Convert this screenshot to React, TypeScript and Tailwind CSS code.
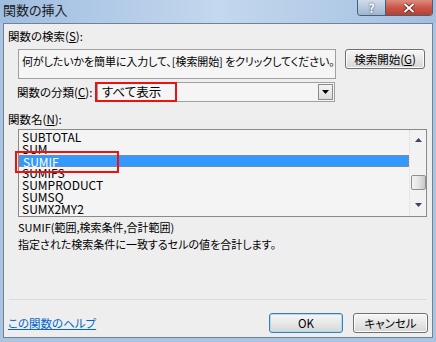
import React from 'react';

const font = "[font-family:'Noto_Sans_CJK_JP',sans-serif] [font-feature-settings:'palt']";

const items = ['SUBTOTAL', 'SUM', 'SUMIF', 'SUMIFS', 'SUMPRODUCT', 'SUMSQ', 'SUMX2MY2'];

const Btn = ({ children, focused }: { children: React.ReactNode; focused?: boolean }) => (
  <div
    className={`flex-1 flex items-center justify-center rounded-[3px] border whitespace-nowrap text-[11.5px] text-black bg-gradient-to-b from-[#f6f6f6] via-[#e8e8e8] to-[#d6d6d6] ${
      focused ? 'border-[#3c7fb1] shadow-[inset_0_0_0_1px_#a8dcf6]' : 'border-[#707070] shadow-[inset_0_0_0_1px_#fcfcfc]'
    }`}
  >
    {children}
  </div>
);

const App = () => {
  return (
    <div className={`w-[436px] h-[342px] flex flex-col bg-[#aac4e2] ${font} text-black`}>
      {/* title bar */}
      <div className="h-[23px] flex items-start bg-gradient-to-r from-[#9fbde0] via-[#c4d8ee] to-[#a2bfe0]">
        <span className="ml-[3px] mt-[3px] text-[13px] leading-[14px] text-[#1a1a1a]">関数の挿入</span>
        <div className="ml-auto mr-[3px] flex h-[16px] rounded-b-[4px] border border-t-0 border-[#4a5e78] overflow-hidden">
          <div className="w-[28px] flex items-center justify-center bg-gradient-to-b from-[#d0dceb] to-[#9db5d2] border-r border-[#4a5e78] text-white font-bold text-[12px] leading-none [text-shadow:0_0_2px_#334]">
            ?
          </div>
          <div className="w-[46px] flex items-center justify-center bg-gradient-to-b from-[#dc8c80] via-[#c9574a] to-[#b83e31]">
            <svg width="12" height="10" viewBox="0 0 12 10">
              <path d="M1.5 1 L10.5 9 M10.5 1 L1.5 9" stroke="#5a1a14" strokeWidth="3.4" />
              <path d="M1.5 1 L10.5 9 M10.5 1 L1.5 9" stroke="#fff" strokeWidth="2" />
            </svg>
          </div>
        </div>
      </div>

      {/* content */}
      <div className="mx-[3px] mb-[4px] flex-1 border border-[#6f8296] bg-[#eeeeee] flex flex-col text-[11.5px] leading-[12px]">
        <div className="mt-[6px] pl-[4px]">
          関数の検索(<span className="underline">S</span>):
        </div>

        <div className="mt-[7px] flex items-start">
          <div className="ml-[14px] w-[318px] h-[30px] border border-[#a0a0a0] bg-[#f5f5f5] pl-[3px] pt-[5px] whitespace-nowrap overflow-hidden text-[11px] tracking-[-0.1px]">
            何がしたいかを簡単に入力して、[検索開始] をクリックしてください。
          </div>
          <div className="ml-[9px] w-[80px] h-[20px] flex">
            <Btn>
              検索開始(<span className="underline">G</span>)
            </Btn>
          </div>
        </div>

        <div className="mt-[3px] flex items-center h-[20px]">
          <div className="ml-[13px] w-[80px] whitespace-nowrap">
            関数の分類(<span className="underline">C</span>):
          </div>
          <div className="relative w-[238px] h-[20px] border border-[#a0a0a0] bg-[#f5f5f5] flex items-center">
            <span className="pl-[4px] text-[12.5px]">すべて表示</span>
            <div className="ml-auto mr-[1px] w-[15px] h-[16px] border border-[#8c8c8c] bg-gradient-to-b from-[#f4f4f4] to-[#dcdcdc] flex items-center justify-center">
              <svg width="7" height="4" viewBox="0 0 7 4">
                <path d="M0 0 H7 L3.5 4 Z" fill="#000" />
              </svg>
            </div>
            <div className="absolute left-[-3px] top-[-1px] w-[82px] h-[20px] border-2 border-[#ee1111]" />
          </div>
        </div>

        <div className="mt-[11px] pl-[4px]">
          関数名(<span className="underline">N</span>):
        </div>

        <div className="relative mt-[4px] ml-[14px] w-[409px] h-[88px] border border-[#8a8a8a] bg-[#f4f4f4] flex">
          <div className="flex-1 pt-[1px] flex flex-col">
            {items.map((name) => (
              <div
                key={name}
                className={`h-[12px] leading-[12px] pl-[3px] text-[12px] ${
                  name === 'SUMIF' ? 'bg-[#3399ff] text-white border border-dotted border-[#c08040] pl-[2px] leading-[10px]' : ''
                }`}
              >
                {name}
              </div>
            ))}
          </div>
          <div className="w-[17px] border-l border-dotted border-[#dcdcdc] bg-[#f2f2f2] flex flex-col items-center">
            <svg className="mt-[8px]" width="7" height="4" viewBox="0 0 7 4">
              <path d="M3.5 0 L7 4 H0 Z" fill="#3a4660" />
            </svg>
            <div className="mt-[33px] w-[15px] h-[15px] rounded-[2px] border border-[#8e8f8f] bg-gradient-to-r from-[#f4f4f4] via-[#e4e4e4] to-[#c8c8c8]" />
            <svg className="mt-[13px]" width="7" height="4" viewBox="0 0 7 4">
              <path d="M0 0 H7 L3.5 4 Z" fill="#3a4660" />
            </svg>
          </div>
          <div className="absolute left-[-4px] top-[21px] w-[104px] h-[22px] border-2 border-[#ee1111]" />
        </div>

        <div className="mt-[3px] pl-[14px] leading-[14px] text-[11px]">SUMIF(範囲,検索条件,合計範囲)</div>
        <div className="mt-[3px] pl-[14px] leading-[14px] text-[11px]">指定された検索条件に一致するセルの値を合計します。</div>

        <div className="mt-[48px] ml-[5px] w-[418px] h-px bg-[#d4dde6]" />

        <div className="mt-[13px] flex items-center h-[20px]">
          <a className="ml-[4px] text-[#0066cc] underline cursor-pointer">この関数のヘルプ</a>
          <div className="ml-auto w-[74px] h-[20px] flex">
            <Btn focused>OK</Btn>
          </div>
          <div className="ml-[10px] mr-[4px] w-[75px] h-[20px] flex">
            <Btn>キャンセル</Btn>
          </div>
        </div>
      </div>
    </div>
  );
};

export default App;
